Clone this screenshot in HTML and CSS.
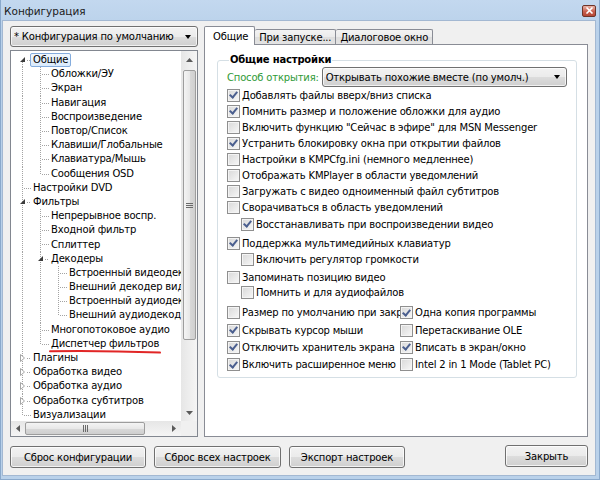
FILE: index.html
```html
<!DOCTYPE html>
<html lang="ru">
<head>
<meta charset="utf-8">
<title>Конфигурация</title>
<link rel="stylesheet" href="styles.css">
</head>
<body>
<div class="window">
  <div class="titlebar">
    <span class="title">Конфигурация</span>
    <span class="close"><svg width="9" height="7" viewBox="0 0 9 7"><path d="M1.5 0.5 L7.5 6.5 M7.5 0.5 L1.5 6.5" stroke="#fff" stroke-width="1.6"/></svg></span>
  </div>
  <div class="client">
    <div class="main">
      <div class="left">
        <div class="combo cfg"><span class="combo-text">* Конфигурация по умолчанию</span><span class="arrow"></span></div>
        <div class="tree">
          <div class="tree-content">
            <div class="row"><span class="g x first"><svg width="18" height="14" viewBox="0 0 18 14"><path d="M12 4 L12 9 L7 9 Z" fill="#3c3c3c"/></svg></span><span class="lbl sel">Общие</span></div>
            <div class="row"><span class="g i"></span><span class="g t"></span><span class="lbl">Обложки/ЭУ</span></div>
            <div class="row"><span class="g i"></span><span class="g t"></span><span class="lbl">Экран</span></div>
            <div class="row"><span class="g i"></span><span class="g t"></span><span class="lbl">Навигация</span></div>
            <div class="row"><span class="g i"></span><span class="g t"></span><span class="lbl">Воспроизведение</span></div>
            <div class="row"><span class="g i"></span><span class="g t"></span><span class="lbl">Повтор/Список</span></div>
            <div class="row"><span class="g i"></span><span class="g t"></span><span class="lbl">Клавиши/Глобальные</span></div>
            <div class="row"><span class="g i"></span><span class="g t"></span><span class="lbl">Клавиатура/Мышь</span></div>
            <div class="row"><span class="g i"></span><span class="g l"></span><span class="lbl">Сообщения OSD</span></div>
            <div class="row"><span class="g t"></span><span class="lbl">Настройки DVD</span></div>
            <div class="row"><span class="g x"><svg width="18" height="14" viewBox="0 0 18 14"><path d="M12 4 L12 9 L7 9 Z" fill="#3c3c3c"/></svg></span><span class="lbl">Фильтры</span></div>
            <div class="row"><span class="g i"></span><span class="g t"></span><span class="lbl">Непрерывное воспр.</span></div>
            <div class="row"><span class="g i"></span><span class="g t"></span><span class="lbl">Входной фильтр</span></div>
            <div class="row"><span class="g i"></span><span class="g t"></span><span class="lbl">Сплиттер</span></div>
            <div class="row"><span class="g i"></span><span class="g x"><svg width="18" height="14" viewBox="0 0 18 14"><path d="M12 4 L12 9 L7 9 Z" fill="#3c3c3c"/></svg></span><span class="lbl">Декодеры</span></div>
            <div class="row"><span class="g i"></span><span class="g i"></span><span class="g t"></span><span class="lbl">Встроенный видеодекодер</span></div>
            <div class="row"><span class="g i"></span><span class="g i"></span><span class="g t"></span><span class="lbl">Внешний декодер видео</span></div>
            <div class="row"><span class="g i"></span><span class="g i"></span><span class="g t"></span><span class="lbl">Встроенный аудиодекодер</span></div>
            <div class="row"><span class="g i"></span><span class="g i"></span><span class="g l"></span><span class="lbl">Внешний аудиодекодер</span></div>
            <div class="row"><span class="g i"></span><span class="g t"></span><span class="lbl">Многопотоковое аудио</span></div>
            <div class="row"><span class="g i"></span><span class="g l"></span><span class="lbl mark">Диспетчер фильтров<svg class="underline" width="114" height="6" viewBox="0 0 114 6"><path d="M1 2.2 Q 50 1.2 111 3.6" stroke="#e12626" stroke-width="2" fill="none" stroke-linecap="round"/></svg></span></div>
            <div class="row"><span class="g x"><svg width="18" height="14" viewBox="0 0 18 14"><path d="M7.5 3.5 L11.5 7 L7.5 10.5 Z" fill="#fff" stroke="#a6a6a6"/></svg></span><span class="lbl">Плагины</span></div>
            <div class="row"><span class="g x"><svg width="18" height="14" viewBox="0 0 18 14"><path d="M7.5 3.5 L11.5 7 L7.5 10.5 Z" fill="#fff" stroke="#a6a6a6"/></svg></span><span class="lbl">Обработка видео</span></div>
            <div class="row"><span class="g x"><svg width="18" height="14" viewBox="0 0 18 14"><path d="M7.5 3.5 L11.5 7 L7.5 10.5 Z" fill="#fff" stroke="#a6a6a6"/></svg></span><span class="lbl">Обработка аудио</span></div>
            <div class="row"><span class="g x"><svg width="18" height="14" viewBox="0 0 18 14"><path d="M7.5 3.5 L11.5 7 L7.5 10.5 Z" fill="#fff" stroke="#a6a6a6"/></svg></span><span class="lbl">Обработка субтитров</span></div>
            <div class="row"><span class="g l"></span><span class="lbl">Визуализации</span></div>
          </div>
          <div class="vscroll">
            <div class="sb-btn"><svg width="7" height="4" viewBox="0 0 7 4"><path d="M0 4 L3.5 0 L7 4 Z" fill="#5a5a5a"/></svg></div>
            <div class="thumb v"><span class="grip-v"></span></div>
            <div class="sb-space"></div>
            <div class="sb-btn"><svg width="7" height="4" viewBox="0 0 7 4"><path d="M0 0 L3.5 4 L7 0 Z" fill="#5a5a5a"/></svg></div>
          </div>
          <div class="hscroll">
            <div class="sb-btn h"><svg width="4" height="7" viewBox="0 0 4 7"><path d="M4 0 L0 3.5 L4 7 Z" fill="#5a5a5a"/></svg></div>
            <div class="thumb h"><span class="grip-h"></span></div>
            <div class="sb-space"></div>
            <div class="sb-btn h"><svg width="4" height="7" viewBox="0 0 4 7"><path d="M0 0 L4 3.5 L0 7 Z" fill="#5a5a5a"/></svg></div>
          </div>
          <div class="corner"></div>
        </div>
      </div>
      <div class="right">
        <div class="tabs">
          <span class="tab active">Общие</span>
          <span class="tab">При запуске...</span>
          <span class="tab">Диалоговое окно</span>
        </div>
        <div class="panel">
          <fieldset class="group">
            <legend>Общие настройки</legend>
            <div class="open-row">
              <span class="green">Способ открытия:</span>
              <div class="combo open"><span class="combo-text">Открывать похожие вместе (по умолч.)</span><span class="arrow"></span></div>
            </div>
            <div class="cb-row"><span class="cb on"></span>Добавлять файлы вверх/вниз списка</div>
            <div class="cb-row"><span class="cb on"></span>Помнить размер и положение обложки для аудио</div>
            <div class="cb-row"><span class="cb"></span>Включить функцию "Сейчас в эфире" для MSN Messenger</div>
            <div class="cb-row"><span class="cb on"></span>Устранить блокировку окна при открытии файлов</div>
            <div class="cb-row"><span class="cb"></span>Настройки в KMPCfg.ini (немного медленнее)</div>
            <div class="cb-row"><span class="cb"></span>Отображать KMPlayer в области уведомлений</div>
            <div class="cb-row"><span class="cb"></span>Загружать с видео одноименный файл субтитров</div>
            <div class="cb-row"><span class="cb"></span>Сворачиваться в область уведомлений</div>
            <div class="cb-row sub gap1"><span class="cb on"></span>Восстанавливать при воспроизведении видео</div>
            <div class="cb-row gap3"><span class="cb on"></span>Поддержка мультимедийных клавиатур</div>
            <div class="cb-row sub"><span class="cb"></span>Включить регулятор громкости</div>
            <div class="cb-row gap2"><span class="cb"></span>Запоминать позицию видео</div>
            <div class="cb-row sub tight"><span class="cb"></span>Помнить и для аудиофайлов</div>
            <div class="two-col">
              <div class="cb-row"><span class="cb"></span><span class="clip">Размер по умолчанию при закрытии</span></div>
              <div class="cb-row"><span class="cb on"></span>Одна копия программы</div>
              <div class="cb-row"><span class="cb on"></span>Скрывать курсор мыши</div>
              <div class="cb-row"><span class="cb"></span>Перетаскивание OLE</div>
              <div class="cb-row"><span class="cb on"></span>Отключить хранитель экрана</div>
              <div class="cb-row"><span class="cb on"></span>Вписать в экран/окно</div>
              <div class="cb-row"><span class="cb on"></span>Включить расширенное меню</div>
              <div class="cb-row"><span class="cb"></span>Intel 2 in 1 Mode (Tablet PC)</div>
            </div>
          </fieldset>
        </div>
      </div>
    </div>
    <div class="buttons">
      <button class="btn w1">Сброс конфигурации</button>
      <button class="btn w2">Сброс всех настроек</button>
      <button class="btn w3">Экспорт настроек</button>
      <button class="btn w4">Закрыть</button>
    </div>
  </div>
</div>
</body>
</html>
```

FILE: styles.css
```css
* { box-sizing: border-box; }
html, body { margin: 0; padding: 0; }
body {
  width: 600px;
  height: 480px;
  overflow: hidden;
  font-family: "DejaVu Sans", Verdana, sans-serif;
  font-size: 10px;
  letter-spacing: -0.18px;
  color: #000;
  background: #bcd3ec;
}
.window {
  width: 600px;
  height: 480px;
  display: flex;
  flex-direction: column;
  background: linear-gradient(#c3d8ef, #b9d1ea 30px, #b9d1ea);
  border-left: 1px solid #8aa9cc;
  border-right: 1px solid #8aa9cc;
  border-bottom: 1px solid #8aa9cc;
}
.titlebar {
  height: 20px;
  display: flex;
  align-items: center;
  padding: 1px 3px 0 3px;
  flex: none;
}
.title { color: #1b1b1b; font-size: 10.5px; letter-spacing: 0; }
.close {
  margin-left: auto;
  width: 14px;
  height: 12px;
  border: 1px solid #6e3428;
  border-radius: 2px;
  background: linear-gradient(#e8b3a8, #c9604f 55%, #b44634);
  display: flex;
  align-items: center;
  justify-content: center;
}
.client {
  flex: 1;
  margin: 0 3px 3px 1px;
  background: #f0f0f0;
  border: 1px solid #a3b8d2;
  padding: 5px 7px 0 7px;
  display: flex;
  flex-direction: column;
}
.main {
  height: 411px;
  display: flex;
  gap: 6px;
}
.left {
  width: 188px;
  display: flex;
  flex-direction: column;
  gap: 3px;
}
.combo {
  display: flex;
  align-items: center;
  border: 1px solid #707070;
  border-radius: 3px;
  background: linear-gradient(#f2f2f2, #ebebeb 50%, #dddddd 50%, #cfcfcf);
  box-shadow: inset 0 0 0 1px rgba(255,255,255,0.7);
  padding: 0 6px 0 3px;
}
.combo-text { flex: 1; white-space: nowrap; overflow: hidden; }
.arrow {
  width: 0; height: 0;
  border-left: 3.5px solid transparent;
  border-right: 3.5px solid transparent;
  border-top: 4px solid #000;
}
.cfg { height: 21px; }
.tree {
  flex: 1;
  border: 1px solid #828790;
  background: #fff;
  display: grid;
  grid-template-columns: 1fr 16px;
  grid-template-rows: 1fr 15px;
  min-height: 0;
}
.tree-content {
  overflow: hidden;
  padding: 2px 0 0 2px;
  display: flex;
  flex-direction: column;
}
.row {
  height: 14.2px;
  display: flex;
  align-items: stretch;
  white-space: nowrap;
  flex: none;
}
.g {
  width: 18px;
  flex: none;
  background-repeat: no-repeat;
  display: flex;
  align-items: center;
}
.g.i {
  background-image: repeating-linear-gradient(to bottom, #a3a3a3 0 1px, transparent 1px 2px);
  background-size: 1px 100%;
  background-position: 9px 0;
}
.g.t {
  background-image: repeating-linear-gradient(to bottom, #a3a3a3 0 1px, transparent 1px 2px),
                    repeating-linear-gradient(to right, #a3a3a3 0 1px, transparent 1px 2px);
  background-size: 1px 100%, 8px 1px;
  background-position: 9px 0, 11px 7px;
}
.g.l {
  background-image: repeating-linear-gradient(to bottom, #a3a3a3 0 1px, transparent 1px 2px),
                    repeating-linear-gradient(to right, #a3a3a3 0 1px, transparent 1px 2px);
  background-size: 1px 8px, 8px 1px;
  background-position: 9px 0, 11px 7px;
}
.g.x {
  background-image: repeating-linear-gradient(to bottom, #a3a3a3 0 1px, transparent 1px 2px),
                    linear-gradient(#fff, #fff),
                    repeating-linear-gradient(to right, #a3a3a3 0 1px, transparent 1px 2px);
  background-size: 1px 100%, 9px 9px, 4px 1px;
  background-position: 9px 0, 5px 2.5px, 14px 7px;
}
.g.x.first {
  background-size: 1px 50%, 9px 9px, 4px 1px;
  background-position: 9px 100%, 5px 2.5px, 14px 7px;
}
.g svg { display: block; }
.lbl {
  margin-left: -1px;
  padding: 0 2px;
  border: 1px solid transparent;
  border-radius: 2px;
  line-height: 12px;
  display: flex;
  align-items: center;
}
.lbl.sel {
  border-color: #84acdd;
  background: linear-gradient(#f2f8fe, #d9eafc);
}
.lbl.mark { position: relative; }
.underline {
  position: absolute;
  left: 0;
  top: 11px;
}
.vscroll {
  background: linear-gradient(to right, #e6e6e6, #f5f5f5);
  display: flex;
  flex-direction: column;
  align-items: center;
}
.hscroll {
  background: linear-gradient(#e6e6e6, #f5f5f5);
  display: flex;
  align-items: center;
}
.corner { background: #f0f0f0; }
.sb-btn {
  height: 17px;
  width: 16px;
  display: flex;
  align-items: center;
  justify-content: center;
  flex: none;
}
.sb-btn.h { width: 14px; height: 15px; }
.sb-space { flex: 1; }
.thumb {
  border: 1px solid #9d9d9d;
  border-radius: 2px;
  display: flex;
  align-items: center;
  justify-content: center;
  flex: none;
}
.thumb.v {
  margin-top: 2px;
  width: 13px;
  height: 270px;
  background: linear-gradient(to right, #f4f4f4, #e8e8e8 50%, #d9d9d9 50%, #cfcfcf);
}
.thumb.h {
  width: 120px;
  height: 13px;
  background: linear-gradient(#f4f4f4, #e8e8e8 50%, #d9d9d9 50%, #cfcfcf);
}
.grip-v {
  width: 7px;
  height: 5px;
  border-top: 1px solid #6a6a6a;
  border-bottom: 1px solid #6a6a6a;
  background: linear-gradient(transparent 1.5px, #6a6a6a 1.5px, #6a6a6a 2.5px, transparent 2.5px);
}
.grip-h {
  width: 5px;
  height: 7px;
  border-left: 1px solid #6a6a6a;
  border-right: 1px solid #6a6a6a;
  background: linear-gradient(to right, transparent 1.5px, #6a6a6a 1.5px, #6a6a6a 2.5px, transparent 2.5px);
}
.right {
  width: 384px;
  display: flex;
  flex-direction: column;
}
.tabs {
  height: 18px;
  display: flex;
  align-items: flex-end;
  padding-left: 1px;
  flex: none;
}
.tab {
  height: 15px;
  border: 1px solid #898c95;
  border-bottom: none;
  border-left: none;
  background: linear-gradient(#f3f3f3, #ebebeb 50%, #dedede 50%, #e3e3e3);
  padding: 0 4px;
  display: flex;
  align-items: center;
  border-radius: 2px 2px 0 0;
  white-space: nowrap;
}
.tab.active {
  height: 19px;
  background: #fff;
  border-left: 1px solid #898c95;
  padding: 0 6px 0 8px;
  margin-bottom: -1px;
  margin-left: -1px;
  position: relative;
  z-index: 1;
}
.panel {
  flex: 1;
  border: 1px solid #898c95;
  background: #fff;
  padding: 9px 10px 0 12px;
}
.group {
  margin: 0;
  border: 1px solid #d5dfe5;
  border-radius: 3px;
  padding: 1px 9px 3px 9px;
  min-width: 0;
}
.group legend {
  font-weight: bold;
  padding: 0 1px;
  margin-left: 2px;
  line-height: 12px;
}
.open-row {
  display: flex;
  align-items: center;
  height: 20px;
}
.green { color: #2f9a36; white-space: nowrap; margin-right: 3px; }
.combo.open { flex: 1; height: 20px; }
.cb-row {
  display: flex;
  align-items: center;
  height: 16px;
  white-space: nowrap;
  min-width: 0;
}
.cb-row.sub { padding-left: 14px; }
.cb-row.gap1 { margin-top: 1px; }
.cb-row.gap2 { margin-top: 2px; }
.cb-row.gap3 { margin-top: 3px; }
.cb-row.tight { height: 15px; }
.cb {
  width: 13px;
  height: 13px;
  flex: none;
  border: 1px solid #8f8f8f;
  background: linear-gradient(135deg, #d8d8d8, #f7f7f7);
  box-shadow: inset 0 0 0 1px #f4f4f4;
  margin-right: 2px;
  display: grid;
  place-items: center;
}
.cb.on::after {
  content: "";
  width: 3px;
  height: 6px;
  border-right: 2px solid #4b5f8f;
  border-bottom: 2px solid #4b5f8f;
  transform: translate(0, -1px) rotate(40deg);
}
.two-col {
  margin-top: 4px;
  display: grid;
  grid-template-columns: 173px 1fr;
  grid-auto-rows: 17.4px;
}
.two-col .cb-row { height: 17.4px; }
.clip { overflow: hidden; }
.buttons {
  margin-top: 9px;
  display: flex;
  gap: 8px;
  align-items: flex-start;
}
.btn {
  height: 22px;
  font-family: "DejaVu Sans", Verdana, sans-serif;
  font-size: 10px;
  letter-spacing: -0.18px;
  color: #000;
  border: 1px solid #707070;
  border-radius: 3px;
  background: linear-gradient(#f2f2f2, #ebebeb 50%, #dddddd 50%, #cfcfcf);
  box-shadow: inset 0 0 0 1px rgba(255,255,255,0.75);
  padding: 0;
}
.w1 { width: 136px; }
.w2 { width: 127px; }
.w3 { width: 116px; }
.w4 { width: 83px; margin-left: auto; margin-top: -1px; }
```
